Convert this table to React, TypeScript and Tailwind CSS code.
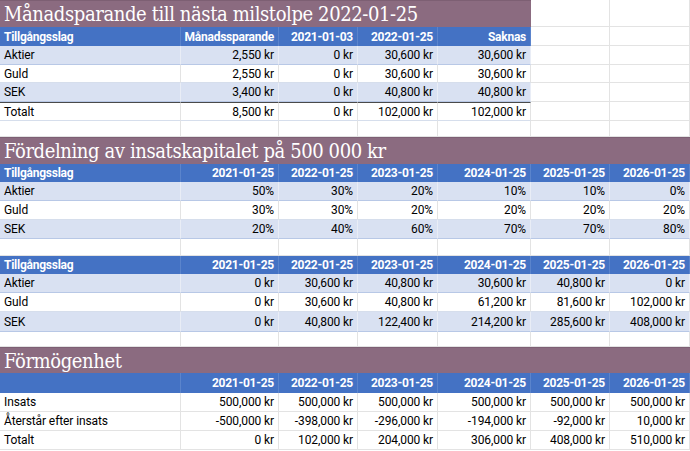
import React from "react";

const GRID = "grid grid-cols-[181px_98px_79px_80px_93px_79px_80px]";
const BODY = "font-['Roboto',sans-serif] text-[12px] text-black";
const TITLE = "font-['DejaVu_Serif_Condensed','DejaVu_Serif',serif] text-[20px] tracking-[-0.4px] text-white";

type Kind = "blank" | "band" | "plain" | "head";

function Cell({ text = "", kind, left = false, extra = "" }: { text?: string; kind: Kind; left?: boolean; extra?: string }) {
  let cls = "flex items-center px-[4px] whitespace-nowrap overflow-hidden ";
  if (kind === "blank") cls += "bg-white border-r border-b border-[#e3e3e3] ";
  if (kind === "plain") cls += "bg-white border-r border-r-[#e3e3e3] border-b border-b-[#d6deec] ";
  if (kind === "band") cls += "bg-[#d9e1f2] border-r border-r-[#e9edf6] border-b border-b-[#b8c8e6] ";
  if (kind === "head") cls += "bg-[#4472c4] border-r border-r-[#5b84cc] text-white font-bold tracking-[-0.25px] ";
  if (kind !== "head") cls += "tracking-[-0.1px] ";
  cls += left ? "justify-start " : "justify-end ";
  return <div className={cls + extra}>{text}</div>;
}

function Row({ h, children }: { h: string; children: React.ReactNode }) {
  return <div className={`${GRID} ${h}`}>{children}</div>;
}

function Title({ text, span, h }: { text: string; span: "full" | "five"; h: string }) {
  return (
    <Row h={h}>
      <div className={`${span === "full" ? "col-span-7" : "col-span-5"} bg-[#8b6b80] border-t border-t-[#7d5f73] flex items-center px-[4px] ${TITLE} whitespace-nowrap overflow-hidden`}>
        {text}
      </div>
      {span === "five" && (
        <>
          <Cell kind="blank" />
          <Cell kind="blank" />
        </>
      )}
    </Row>
  );
}

function Blank({ h }: { h: string }) {
  return (
    <Row h={h}>
      {Array.from({ length: 7 }).map((_, i) => (
        <Cell key={i} kind="blank" />
      ))}
    </Row>
  );
}

function Head({ cells, h, pad = 0 }: { cells: string[]; h: string; pad?: number }) {
  return (
    <Row h={h}>
      {cells.map((c, i) => (
        <Cell key={i} kind="head" text={c} left={i === 0} />
      ))}
      {Array.from({ length: pad }).map((_, i) => (
        <Cell key={"p" + i} kind="blank" />
      ))}
    </Row>
  );
}

function Data({ cells, h, kind, pad = 0, topDark = false }: { cells: string[]; h: string; kind: Kind; pad?: number; topDark?: boolean }) {
  return (
    <Row h={h}>
      {cells.map((c, i) => (
        <Cell key={i} kind={kind} text={c} left={i === 0} extra={topDark ? "border-t-[1.5px] border-t-[#4a4a4a]" : ""} />
      ))}
      {Array.from({ length: pad }).map((_, i) => (
        <Cell key={"p" + i} kind="blank" />
      ))}
    </Row>
  );
}

const dates = ["2021-01-25", "2022-01-25", "2023-01-25", "2024-01-25", "2025-01-25", "2026-01-25"];

export default function App() {
  return (
    <div className={`w-[690px] h-[451px] bg-white overflow-hidden ${BODY}`}>
      <Title text="Månadsparande till nästa milstolpe 2022-01-25" span="five" h="h-[27px]" />
      <Head cells={["Tillgångsslag", "Månadssparande", "2021-01-03", "2022-01-25", "Saknas"]} h="h-[19px]" pad={2} />
      <Data kind="band" h="h-[19px]" pad={2} cells={["Aktier", "2,550 kr", "0 kr", "30,600 kr", "30,600 kr"]} />
      <Data kind="plain" h="h-[18px]" pad={2} cells={["Guld", "2,550 kr", "0 kr", "30,600 kr", "30,600 kr"]} />
      <Data kind="band" h="h-[19px]" pad={2} cells={["SEK", "3,400 kr", "0 kr", "40,800 kr", "40,800 kr"]} />
      <Data kind="plain" h="h-[19px]" pad={2} topDark cells={["Totalt", "8,500 kr", "0 kr", "102,000 kr", "102,000 kr"]} />
      <Blank h="h-[16px]" />

      <Title text="Fördelning av insatskapitalet på 500 000 kr" span="full" h="h-[27px]" />
      <Head cells={["Tillgångsslag", ...dates]} h="h-[18px]" />
      <Data kind="band" h="h-[19px]" cells={["Aktier", "50%", "30%", "20%", "10%", "10%", "0%"]} />
      <Data kind="plain" h="h-[19px]" cells={["Guld", "30%", "30%", "20%", "20%", "20%", "20%"]} />
      <Data kind="band" h="h-[19px]" cells={["SEK", "20%", "40%", "60%", "70%", "70%", "80%"]} />
      <Blank h="h-[17px]" />

      <Head cells={["Tillgångsslag", ...dates]} h="h-[18px]" />
      <Data kind="band" h="h-[19px]" cells={["Aktier", "0 kr", "30,600 kr", "40,800 kr", "30,600 kr", "40,800 kr", "0 kr"]} />
      <Data kind="plain" h="h-[19px]" cells={["Guld", "0 kr", "30,600 kr", "40,800 kr", "61,200 kr", "81,600 kr", "102,000 kr"]} />
      <Data kind="band" h="h-[20px]" cells={["SEK", "0 kr", "40,800 kr", "122,400 kr", "214,200 kr", "285,600 kr", "408,000 kr"]} />
      <Blank h="h-[15px]" />

      <Title text="Förmögenhet" span="full" h="h-[26px]" />
      <Head cells={["", ...dates]} h="h-[20px]" />
      <Data kind="blank" h="h-[19px]" cells={["Insats", "500,000 kr", "500,000 kr", "500,000 kr", "500,000 kr", "500,000 kr", "500,000 kr"]} />
      <Data kind="blank" h="h-[19px]" cells={["Återstår efter insats", "-500,000 kr", "-398,000 kr", "-296,000 kr", "-194,000 kr", "-92,000 kr", "10,000 kr"]} />
      <Data kind="blank" h="h-[19px]" cells={["Totalt", "0 kr", "102,000 kr", "204,000 kr", "306,000 kr", "408,000 kr", "510,000 kr"]} />
    </div>
  );
}
